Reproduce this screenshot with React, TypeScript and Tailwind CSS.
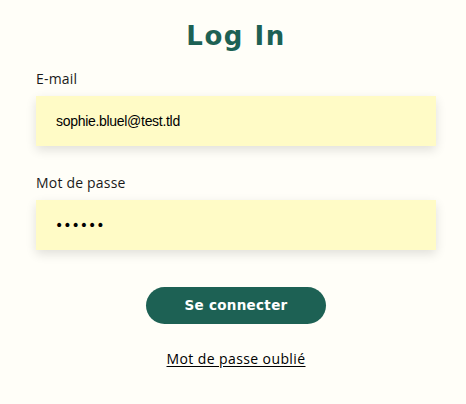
export default function App() {
  return (
    <div className="min-h-[404px] w-full bg-[#FFFEF8] font-['Open_Sans',sans-serif]">
      <div className="flex flex-col items-center pl-[6px] pt-[18px]">
        <h2 className="text-[26px] leading-[36px] font-bold tracking-[1.5px] text-[#1D6154] font-['DejaVu_Sans',sans-serif]">
          Log In
        </h2>

        <form className="mt-[16px] flex w-[400px] flex-col" onSubmit={(e) => e.preventDefault()}>
          <label className="text-[14px] leading-[18px] tracking-[0.2px] text-[#1a1a1a]">E-mail</label>
          <input
            type="email"
            defaultValue="sophie.bluel@test.tld"
            className="mt-[8px] h-[50px] w-full bg-[#FFFBC6] px-[20px] text-[14px] tracking-[-0.3px] text-black shadow-[0_4px_10px_rgba(0,0,0,0.12)] outline-none font-['Liberation_Sans',sans-serif]"
          />

          <label className="mt-[28px] text-[14px] leading-[18px] tracking-[0.2px] text-[#1a1a1a]">Mot de passe</label>
          <input
            type="password"
            defaultValue="azerty"
            className="mt-[8px] h-[50px] w-full bg-[#FFFBC6] px-[19px] text-[14px] text-black shadow-[0_4px_10px_rgba(0,0,0,0.12)] outline-none font-['DejaVu_Sans',sans-serif]"
          />

          <button
            type="submit"
            className="mx-auto mt-[37px] h-[37px] w-[180px] rounded-full bg-[#1D6154] text-[13.5px] font-bold tracking-[0.3px] text-white font-['DejaVu_Sans',sans-serif]"
          >
            Se connecter
          </button>

          <a href="#" className="mx-auto mt-[26px] text-[14px] leading-[18px] tracking-[0.4px] text-black underline underline-offset-2">
            Mot de passe oublié
          </a>
        </form>
      </div>
    </div>
  )
}
